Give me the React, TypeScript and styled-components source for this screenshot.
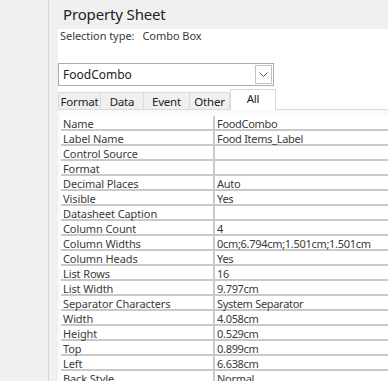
import React from "react";
import styled, { createGlobalStyle } from "styled-components";

const Global = createGlobalStyle`
  html, body { margin: 0; padding: 0; background: #f0f0f0; }
  body { font-family: "Noto Sans", "Open Sans", sans-serif; }
`;

const Page = styled.div`
  display: flex;
  width: 388px;
  height: 381px;
  overflow: hidden;
  background: #f0f0f0;
`;

const LeftStrip = styled.div`
  width: 48px;
  flex: none;
  background: #f0f0f0;
  border-right: 1px solid #d4d4d4;
`;

const Panel = styled.div`
  flex: 1;
  display: flex;
  flex-direction: column;
  background: #f0f0f0;
  min-width: 0;
`;

const Title = styled.div`
  height: 29px;
  padding-left: 14px;
  font-size: 15px;
  letter-spacing: -0.15px;
  line-height: 29px;
  color: #222;
  white-space: nowrap;
`;

const Content = styled.div`
  margin-left: 9px;
  flex: 1;
  background: #ffffff;
  display: flex;
  flex-direction: column;
  min-width: 0;
`;

const SelectionRow = styled.div`
  height: 14px;
  padding: 0 0 0 2px;
  font-size: 11px;
  letter-spacing: -0.05px;
  line-height: 14px;
  color: #3a3a3a;
  white-space: nowrap;
  display: flex;
  gap: 8px;
`;

const Combo = styled.div`
  margin-top: 20px;
  width: 216px;
  height: 23px;
  box-sizing: border-box;
  border: 1px solid #abadb3;
  background: #fff;
  display: flex;
  align-items: center;
  justify-content: space-between;
  padding: 0 1px 0 4px;
  font-size: 12px;
  color: #222;
`;

const DropButton = styled.div`
  width: 17px;
  height: 19px;
  box-sizing: border-box;
  border: 1px solid #c4c4c4;
  display: flex;
  align-items: center;
  justify-content: center;
`;

const TabBar = styled.div`
  margin-top: 3px;
  height: 21px;
  display: flex;
  align-items: flex-end;
`;

const Tab = styled.div<{ $w: number; $active?: boolean }>`
  width: ${(p) => p.$w}px;
  height: ${(p) => (p.$active ? 21 : 18)}px;
  box-sizing: border-box;
  display: flex;
  align-items: center;
  justify-content: center;
  font-size: 11.5px;
  letter-spacing: -0.2px;
  color: #222;
  background: ${(p) => (p.$active ? "#ffffff" : "#f0f0f0")};
  border: 1px solid #dadada;
  border-left: ${(p) => (p.$active ? "1px solid #dadada" : "none")};
  border-bottom: ${(p) => (p.$active ? "none" : "1px solid #dadada")};
  padding-bottom: ${(p) => (p.$active ? 4 : 0)}px;
  &:first-child { border-left: 1px solid #dadada; }
`;

const TabFill = styled.div`
  flex: 1;
  height: 1px;
  background: #dadada;
`;

const TabPage = styled.div`
  flex: 1;
  background: #fafafa;
  padding: 6px 0 0 3px;
  min-width: 0;
`;

const Grid = styled.div`
  display: flex;
  flex-direction: column;
  background: #fff;
`;

const Row = styled.div`
  display: grid;
  grid-template-columns: 152px 1fr;
  height: 15px;
  box-sizing: border-box;
  border-bottom: 2px solid #c9c9c9;
  font-size: 11px;
  line-height: 14px;
  color: #3a3a3a;
  white-space: nowrap;
`;

const Label = styled.div`
  padding: 1px 0 0 2px;
  letter-spacing: -0.1px;
`;

const Value = styled.div`
  padding: 1px 0 0 2px;
  letter-spacing: -0.3px;
  border-left: 2px solid #c9c9c9;
  overflow: hidden;
`;

const rows: [string, string][] = [
  ["Name", "FoodCombo"],
  ["Label Name", "Food Items_Label"],
  ["Control Source", ""],
  ["Format", ""],
  ["Decimal Places", "Auto"],
  ["Visible", "Yes"],
  ["Datasheet Caption", ""],
  ["Column Count", "4"],
  ["Column Widths", "0cm;6.794cm;1.501cm;1.501cm"],
  ["Column Heads", "Yes"],
  ["List Rows", "16"],
  ["List Width", "9.797cm"],
  ["Separator Characters", "System Separator"],
  ["Width", "4.058cm"],
  ["Height", "0.529cm"],
  ["Top", "0.899cm"],
  ["Left", "6.638cm"],
  ["Back Style", "Normal"],
];

const tabs: [string, number][] = [
  ["Format", 43],
  ["Data", 43],
  ["Event", 46],
  ["Other", 40],
];

export default function App() {
  return (
    <>
      <Global />
      <Page>
        <LeftStrip />
        <Panel>
          <Title>Property Sheet</Title>
          <Content>
            <SelectionRow>
              <span>Selection type:</span>
              <span>Combo Box</span>
            </SelectionRow>
            <Combo>
              <span>FoodCombo</span>
              <DropButton>
                <svg width="9" height="5" viewBox="0 0 9 5">
                  <path d="M0.5 0.5 L4.5 4.5 L8.5 0.5" fill="none" stroke="#555" strokeWidth="1" />
                </svg>
              </DropButton>
            </Combo>
            <TabBar>
              {tabs.map(([t, w]) => (
                <Tab key={t} $w={w}>
                  {t}
                </Tab>
              ))}
              <Tab $w={46} $active>
                All
              </Tab>
              <TabFill />
            </TabBar>
            <TabPage>
              <Grid>
                {rows.map(([k, v]) => (
                  <Row key={k}>
                    <Label>{k}</Label>
                    <Value>{v}</Value>
                  </Row>
                ))}
              </Grid>
            </TabPage>
          </Content>
        </Panel>
      </Page>
    </>
  );
}
